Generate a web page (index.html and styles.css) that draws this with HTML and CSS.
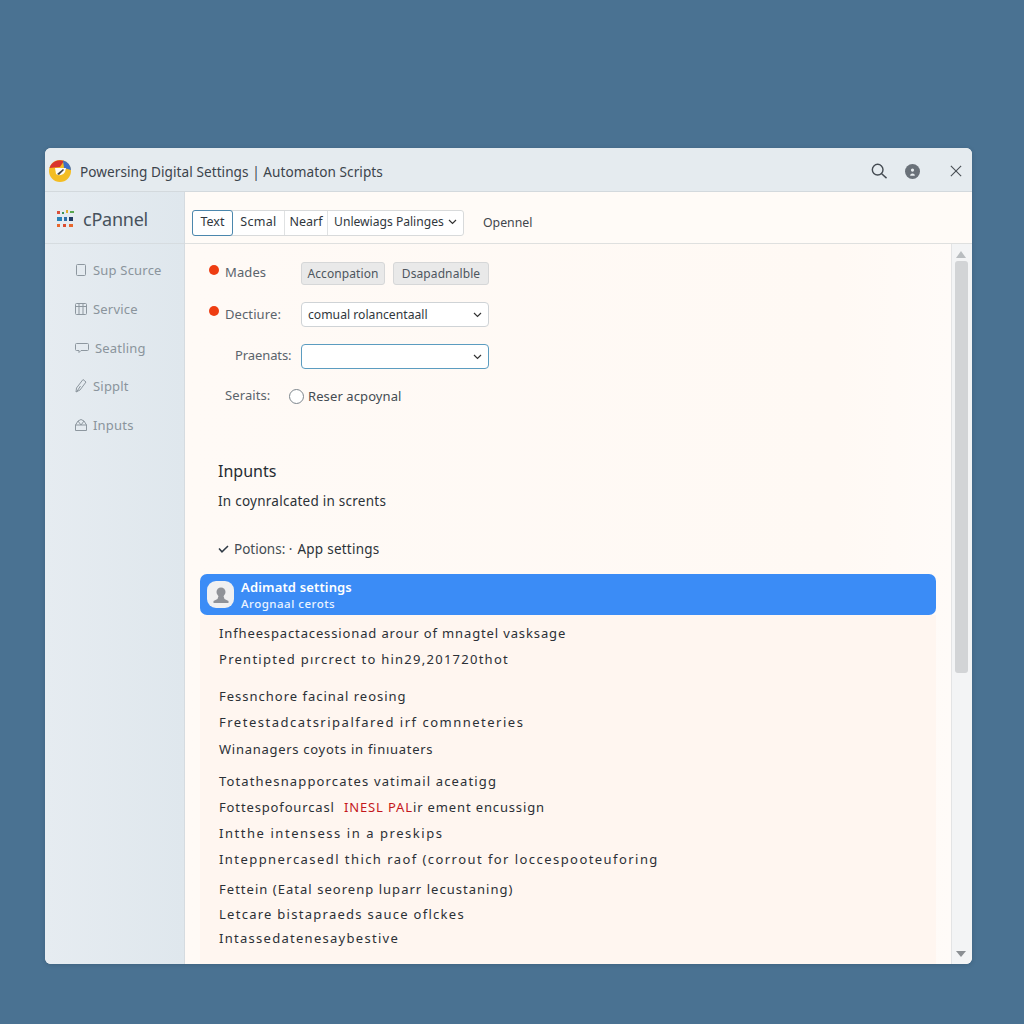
FILE: index.html
```html
<!DOCTYPE html>
<html lang="en">
<head>
<meta charset="utf-8">
<title>Powersing Digital Settings</title>
<link rel="stylesheet" href="styles.css">
</head>
<body>
<div class="window">
  <header class="titlebar">
    <svg class="app-logo" width="24" height="24" viewBox="0 0 24 24">
      <circle cx="12" cy="12" r="11" fill="#f4bd22"/>
      <path d="M1.500 9A11 11 0 0 1 16 2L12 8Z" fill="#d9352c"/>
      <path d="M15 1.500A11 11 0 0 1 23 11L16 9Z" fill="#3f6fc4"/>
      <path d="M7 9h11l-1 4a6 6 0 0 1-9 2Z" fill="#fdfdf8"/>
      <path d="M9 15l6-5 1 1-5 5Z" fill="#444"/>
    </svg>
    <span class="title-text">Powersing Digital Settings | Automaton Scripts</span>
    <div class="title-actions">
      <svg class="ico-search" width="16" height="16" viewBox="0 0 18 18" fill="none" stroke="#444b52" stroke-width="1.600"><circle cx="7.500" cy="7.500" r="6"/><path d="M12 12l5.500 5"/></svg>
      <svg class="ico-user" width="15" height="15" viewBox="0 0 16 16"><circle cx="8" cy="8" r="8" fill="#6a7179"/><circle cx="8" cy="6.500" r="1.700" fill="#e8edf0"/><path d="M5.500 12.500c0-3 5-3 5 0Z" fill="#e8edf0"/></svg>
      <svg class="ico-close" width="12" height="12" viewBox="0 0 14 14" fill="none" stroke="#4a5056" stroke-width="1.300"><path d="M1 1l12 12M13 1L1 13"/></svg>
    </div>
  </header>
  <div class="body">
    <aside class="sidebar">
      <div class="brand">
        <svg width="20" height="20" viewBox="0 0 20 20">
          <rect x="1" y="2" width="3" height="3" fill="#d9503a"/><rect x="6" y="3" width="2" height="2" fill="#3c8f5a"/><rect x="10" y="1" width="2" height="3" fill="#e0b030"/><rect x="14" y="2" width="4" height="2" fill="#5aa74f"/>
          <rect x="1" y="8" width="5" height="4" fill="#2a84b8"/><rect x="8" y="8" width="3" height="4" fill="#2f6fa8"/><rect x="13" y="8" width="4" height="4" fill="#223c66"/>
          <rect x="1" y="15" width="3" height="3" fill="#e8672c"/><rect x="7" y="15" width="3" height="3" fill="#dc4c30"/><rect x="13" y="15" width="4" height="3" fill="#e8672c"/>
        </svg>
        <span class="brand-name">cPannel</span>
      </div>
      <nav class="nav">
        <a class="nav-item"><svg width="14" height="14" viewBox="0 0 14 14" fill="none" stroke="#8d979f"><rect x="2.500" y="1.500" width="9" height="11" rx="1"/></svg><span>Sup Scurce</span></a>
        <a class="nav-item"><svg width="14" height="14" viewBox="0 0 14 14" fill="none" stroke="#8d979f"><rect x="1.500" y="1.500" width="11" height="11" rx="1"/><path d="M5 2v10M9 2v10M2 4.500h10"/></svg><span>Service</span></a>
        <a class="nav-item"><svg width="16" height="14" viewBox="0 0 16 14" fill="none" stroke="#8d979f"><path d="M2.500 2.500h11a1 1 0 0 1 1 1v5a1 1 0 0 1-1 1H7l-2 2v-2H2.500a1 1 0 0 1-1-1v-5a1 1 0 0 1 1-1Z"/></svg><span>Seatling</span></a>
        <a class="nav-item"><svg width="14" height="16" viewBox="0 0 14 16" fill="none" stroke="#8d979f"><path d="M9 1.500l3 2.500-6 8-4 2 .5-4ZM2.500 14l4-6"/></svg><span>Sipplt</span></a>
        <a class="nav-item"><svg width="14" height="14" viewBox="0 0 14 14" fill="none" stroke="#8d979f"><path d="M1.500 7L4 3l3-1.500L10 3l2.500 4v5.500h-11ZM4 3l3 4 3-4M1.500 7H12.500"/></svg><span>Inputs</span></a>
      </nav>
    </aside>
    <main class="main">
      <div class="toolbar">
        <div class="tabs">
          <button class="tab active">Text</button>
          <button class="tab">Scmal</button>
          <button class="tab">Nearf</button>
          <button class="tab">Unlewiags Palinges <svg width="9" height="6" viewBox="0 0 9 6" fill="none" stroke="#333" stroke-width="1.200"><path d="M1 1l3.500 3.500L8 1"/></svg></button>
        </div>
        <span class="open-link">Opennel</span>
      </div>
      <div class="content-wrap">
        <div class="content">
          <section class="form">
            <div class="form-row row-modes">
              <span class="dot"></span><label class="lbl">Mades</label>
              <div class="chips"><span class="chip">Acconpation</span><span class="chip">Dsapadnalble</span></div>
            </div>
            <div class="form-row row-dec">
              <span class="dot"></span><label class="lbl">Dectiure:</label>
              <div class="select"><span>comual rolancentaall</span><svg width="9" height="6" viewBox="0 0 9 6" fill="none" stroke="#333" stroke-width="1.200"><path d="M1 1l3.500 3.500L8 1"/></svg></div>
            </div>
            <div class="form-row row-par">
              <label class="lbl lbl-right">Praenats:</label>
              <div class="select focus"><span></span><svg width="9" height="6" viewBox="0 0 9 6" fill="none" stroke="#333" stroke-width="1.200"><path d="M1 1l3.500 3.500L8 1"/></svg></div>
            </div>
            <div class="form-row row-ser">
              <label class="lbl lbl-ser">Seraits:</label>
              <span class="radio"></span><span class="radio-text">Reser acpoynal</span>
            </div>
          </section>
          <section class="inputs">
            <h2>Inpunts</h2>
            <p>In coynralcated in scrents</p>
            <div class="crumb"><svg width="11" height="8" viewBox="0 0 11 8" fill="none" stroke="#2f3a45" stroke-width="1.500"><path d="M1 3.500L4 6.800 10 1"/></svg><span class="crumb-a">Potions: ·</span><span class="crumb-b">App settings</span></div>
          </section>
          <div class="selected">
            <span class="avatar"><svg width="20" height="20" viewBox="0 0 20 20" fill="#8f9298"><circle cx="10" cy="7" r="4.500"/><path d="M7.500 11h5l1 3 4 2v2H2.500v-2l4-2Z"/></svg></span>
            <div class="sel-text"><strong>Adimatd settings</strong><span>Arognaal cerots</span></div>
          </div>
          <div class="list">
            <ul class="group g1"><li>Infheespactacessionad arour of mnagtel vasksage</li><li>Prentipted pırcrect to hin29,201720thot</li></ul>
            <ul class="group g2"><li>Fessnchore facinal reosing</li><li>Fretestadcatsripalfared irf comnneteries</li><li>Winanagers coyots in finıuaters</li></ul>
            <ul class="group g3"><li>Totathesnapporcates vatimail aceatigg</li><li>Fottespofourcasl <em>INESL PAL</em>ir ement encussign</li><li>Intthe intensess in a preskips</li><li>Inteppnercasedl thich raof (corrout for loccespooteuforing</li></ul>
            <ul class="group g4"><li>Fettein (Eatal seorenp luparr lecustaning)</li><li>Letcare bistapraeds sauce oflckes</li><li>Intassedatenesaybestive</li></ul>
          </div>
        </div>
        <div class="scrollbar">
          <svg class="arrow" width="10" height="7" viewBox="0 0 10 7"><path d="M5 0l5 7H0Z" fill="#b9bdc0"/></svg>
          <div class="thumb"></div>
          <svg class="arrow arrow-down" width="10" height="6" viewBox="0 0 10 6"><path d="M0 0h10L5 6Z" fill="#8b8f93"/></svg>
        </div>
      </div>
    </main>
  </div>
</div>
</body>
</html>
```
FILE: styles.css
```css
* { box-sizing: border-box; }
html, body { height: 100%; }
body {
  margin: 0;
  background: #4a7292;
  font-family: "Noto Sans", "Open Sans", sans-serif;
  color: #2c3238;
  padding: 148px 52px 60px 45px;
}
.window {
  height: 816px;
  border-radius: 6px;
  overflow: hidden;
  background: #fff9f5;
  display: flex;
  flex-direction: column;
  box-shadow: 0 1px 4px rgba(30, 50, 70, .25);
}
.titlebar {
  height: 44px;
  flex: none;
  background: #e5ebef;
  border-bottom: 1px solid #d3d9dd;
  display: flex;
  align-items: center;
  padding: 3px 10px 0 3px;
}
.app-logo { flex: none; }
.title-text { margin-left: 8px; font-size: 13.600px; color: #3c444c; margin-top: 1px; letter-spacing: .06px; }
.title-actions { margin-left: auto; display: flex; align-items: center; }
.ico-user { margin-left: 18px; }
.ico-close { margin-left: 30px; }
.body { flex: 1; display: flex; min-height: 0; }
.sidebar {
  width: 140px;
  flex: none;
  background: linear-gradient(90deg, #e6ecf1, #dfe7ed);
  border-right: 1px solid #d5dbe0;
}
.brand {
  height: 52px;
  border-bottom: 1px solid #d6dce0;
  display: flex;
  align-items: center;
  padding: 3px 0 0 11px;
  gap: 7px;
}
.brand-name { font-size: 18px; color: #47525c; letter-spacing: -.25px; }
.nav { display: flex; flex-direction: column; gap: 18.750px; padding: 16px 0 0 29px; }
.nav-item { display: flex; align-items: center; gap: 5px; height: 20px; font-size: 13px; color: #8a949c; letter-spacing: .2px; }
.main { flex: 1; display: flex; flex-direction: column; min-width: 0; }
.toolbar {
  height: 52px;
  flex: none;
  background: #fffbf7;
  border-bottom: 1px solid #dfe0df;
  display: flex;
  align-items: center;
  padding: 10px 0 0 7px;
}
.tabs { display: flex; height: 26px; width: 272px; background: #fff; border: 1px solid #d8dadb; border-radius: 3px; }
.tab {
  font: 12.500px "Noto Sans", sans-serif;
  color: #30373d;
  background: none;
  border: 0;
  border-right: 1px solid #e0e2e3;
  padding: 0 0 2px;
  white-space: nowrap;
}
.tab:nth-child(2) { width: 52px; letter-spacing: .3px; }
.tab:nth-child(3) { width: 43px; }
.tab:last-child { border-right: 0; flex: 1; font-size: 12.100px; }
.tab svg { margin-left: 1px; vertical-align: 1px; }
.tab.active { margin: -1px 0 -1px -1px; width: 41px; padding: 0 0 2px; border: 1px solid #4b87ad; border-radius: 3px; background: #fff; }
.open-link { margin-left: 19px; font-size: 12.300px; color: #3f464c; }
.content-wrap { flex: 1; display: flex; min-height: 0; }
.content { flex: 1; min-width: 0; overflow: hidden; padding-right: 15px; background: linear-gradient(90deg, #fffaf6, #fff9f4 85%, #fffbf8); }
.form { height: 216px; padding: 0 0 0 24px; }
.form-row { display: flex; align-items: center; font-size: 13px; color: #5b646c; }
.dot { width: 10px; height: 10px; border-radius: 50%; background: #ee3d12; flex: none; margin-top: -7px; }
.lbl { margin-left: 6px; margin-top: -2px; letter-spacing: .1px; }
.row-modes { padding-top: 17px; height: 41px; }
.row-modes .lbl { width: 76px; }
.row-dec { margin-top: 17px; height: 25px; }
.row-dec .lbl { width: 76px; }
.chips { display: flex; gap: 8px; }
.chip { height: 23px; width: 84px; display: flex; align-items: center; justify-content: center; background: #e9e9e9; border: 1px solid #d6d7d8; border-radius: 3px; font-size: 12px; color: #4e565e; letter-spacing: .1px; }
.chip + .chip { width: 96px; }
.select { width: 188px; height: 25px; display: flex; align-items: center; justify-content: space-between; background: #fff; border: 1px solid #cfd3d6; border-radius: 4px; padding: 0 6px; font-size: 12.200px; color: #30373d; }
.select.focus { border-color: #5b9cc0; }
.row-par { margin-top: 17px; height: 25px; }
.lbl-right { margin-left: 26px; margin-top: -3px; width: 66px; letter-spacing: -.1px; }
.row-ser { margin-top: 15px; height: 23px; }
.lbl-ser { margin-left: 16px; width: 64px; }
.radio { width: 15px; height: 15px; border: 1px solid #7d868d; border-radius: 50%; background: #fff; flex: none; margin-top: 2px; }
.radio-text { margin-left: 4px; font-size: 13px; color: #444c53; letter-spacing: .1px; }
.inputs { padding-left: 33px; }
.inputs h2 { margin: 0; font-size: 16px; line-height: 22px; font-weight: 400; color: #262c32; }
.inputs p { margin: 8px 0 0; font-size: 13.500px; line-height: 22px; color: #2b3137; letter-spacing: .25px; }
.crumb { margin-top: 26px; height: 22px; display: flex; align-items: center; font-size: 13.500px; color: #2b3238; gap: 5px; }
.crumb-a { color: #444c53; }
.crumb-b { letter-spacing: .25px; }
.selected { margin: 14px 0 0 15px; height: 41px; background: #3b8cf6; border-radius: 7px; display: flex; align-items: center; padding-left: 7px; color: #fff; }
.avatar { width: 27px; height: 27px; border-radius: 9px; background: #f0f0f1; display: flex; align-items: center; justify-content: center; flex: none; }
.sel-text { margin-left: 7px; display: flex; flex-direction: column; }
.sel-text strong { font-size: 13px; line-height: 17px; font-weight: 600; letter-spacing: .15px; }
.sel-text span { font-size: 11.500px; line-height: 15px; font-weight: 500; letter-spacing: .5px; color: #eaf3ff; }
.list { margin-left: 15px; padding-left: 19px; background: #fff6f0; height: 400px; }
.group { list-style: none; margin: 0; padding: 0; font-size: 13px; color: #2b3036; white-space: nowrap; }
.group li { line-height: 26px; }
.group em { font-style: normal; color: #c4161c; margin-left: 5px; }
.g1 { padding-top: 5px; }
.g2 { padding-top: 11px; }
.g3 { padding-top: 6px; }
.g4 { padding-top: 4px; }
.g2 li:nth-child(2) { line-height: 27px; }
.g4 li:nth-child(n+2) { line-height: 24px; }
.g1 li:nth-child(1) { letter-spacing: .87px; }
.g1 li:nth-child(2) { letter-spacing: 1.260px; }
.g2 li:nth-child(1) { letter-spacing: .99px; }
.g2 li:nth-child(2) { letter-spacing: 1.500px; }
.g2 li:nth-child(3) { letter-spacing: .72px; }
.g3 li:nth-child(1) { letter-spacing: 1.150px; }
.g3 li:nth-child(2) { letter-spacing: .86px; }
.g3 li:nth-child(3) { letter-spacing: 1.550px; }
.g3 li:nth-child(4) { letter-spacing: 1.440px; }
.g4 li:nth-child(1) { letter-spacing: 1.030px; }
.g4 li:nth-child(2) { letter-spacing: 1.270px; }
.g4 li:nth-child(3) { letter-spacing: 1.280px; }
.scrollbar { width: 21px; flex: none; background: #f3f4f5; border-left: 1px solid #e3e4e5; display: flex; flex-direction: column; align-items: center; padding: 7px 2px 7px 0; }
.thumb { width: 13px; height: 412px; margin-top: 3px; background: #d2d4d6; border-radius: 3px; }
.arrow { flex: none; }
.arrow-down { margin-top: auto; }
```
